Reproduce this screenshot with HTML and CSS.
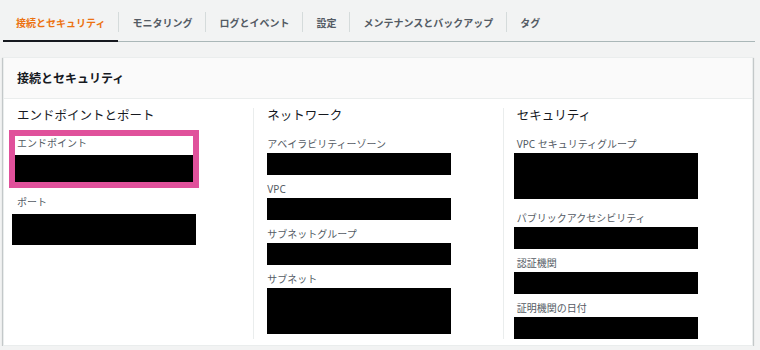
FILE: index.html
```html
<!DOCTYPE html>
<html lang="ja">
<head>
  <meta charset="UTF-8">
  <meta name="viewport" content="width=device-width, initial-scale=1.0">
  <title>接続とセキュリティ</title>
  <link rel="stylesheet" href="styles.css">
</head>
<body>

<nav class="tabs">
  <div class="tab active">接続とセキュリティ</div>
  <span class="tab-sep"></span>
  <div class="tab">モニタリング</div>
  <span class="tab-sep"></span>
  <div class="tab">ログとイベント</div>
  <span class="tab-sep"></span>
  <div class="tab">設定</div>
  <span class="tab-sep"></span>
  <div class="tab">メンテナンスとバックアップ</div>
  <span class="tab-sep"></span>
  <div class="tab">タグ</div>
</nav>

<section class="panel">
  <div class="panel-header">
    <h2>接続とセキュリティ</h2>
  </div>
  <div class="panel-body">
    <div class="col col-endpoint">
      <h3>エンドポイントとポート</h3>
      <div class="item highlight">
        <div class="label">エンドポイント</div>
        <div class="redact redact-hl"></div>
      </div>
      <div class="item">
        <div class="label">ポート</div>
        <div class="redact redact-md"></div>
      </div>
    </div>

    <div class="col">
      <h3>ネットワーク</h3>
      <div class="item">
        <div class="label">アベイラビリティーゾーン</div>
        <div class="redact"></div>
      </div>
      <div class="item">
        <div class="label">VPC</div>
        <div class="redact"></div>
      </div>
      <div class="item">
        <div class="label">サブネットグループ</div>
        <div class="redact"></div>
      </div>
      <div class="item">
        <div class="label">サブネット</div>
        <div class="redact redact-lg"></div>
      </div>
    </div>

    <div class="col col-security">
      <h3>セキュリティ</h3>
      <div class="item item-wide-gap">
        <div class="label">VPC セキュリティグループ</div>
        <div class="redact redact-lg"></div>
      </div>
      <div class="item">
        <div class="label">パブリックアクセシビリティ</div>
        <div class="redact"></div>
      </div>
      <div class="item">
        <div class="label">認証機関</div>
        <div class="redact"></div>
      </div>
      <div class="item">
        <div class="label">証明機関の日付</div>
        <div class="redact"></div>
      </div>
    </div>
  </div>
</section>

</body>
</html>
```

FILE: styles.css
```css
body {
  margin: 0;
  padding: 0 5px 0 3px;
  background-color: #f2f3f3;
  font-family: "Noto Sans", "Noto Sans CJK JP", sans-serif;
  color: #16191f;
}

/* tab bar */
.tabs {
  display: flex;
  align-items: flex-start;
  border-bottom: 1px solid #aab7b8;
}
.tab {
  height: 36px;
  padding: 4px 13px 0;
  display: flex;
  align-items: center;
  font-size: 10px;
  font-weight: bold;
  color: #545b64;
  white-space: nowrap;
  border-bottom: 2px solid transparent;
  margin-bottom: -1px;
}
.tab.active {
  color: #ec7211;
  border-bottom-color: #16191f;
}
.tab-sep {
  width: 1px;
  height: 20px;
  margin-top: 12px;
  background-color: #d5dbdb;
}

/* panel */
.panel {
  margin: 15px 2px 0 0;
  background-color: #fff;
  border: 1px solid #eaeded;
  box-shadow: 0 1px 1px 0 rgba(0, 28, 36, 0.3), 1px 1px 1px 0 rgba(0, 28, 36, 0.15), -1px 1px 1px 0 rgba(0, 28, 36, 0.15);
}
.panel-header {
  height: 40px;
  display: flex;
  align-items: center;
  padding: 0 13px;
  background-color: #fafafa;
  border-bottom: 1px solid #eaeded;
}
.panel-header h2 {
  margin: 0;
  font-size: 12px;
  font-weight: bold;
  color: #16191f;
}
.panel-body {
  display: grid;
  grid-template-columns: repeat(3, 1fr);
  padding: 9px 0 6px;
}
.col {
  padding: 0 13px;
  border-left: 1px solid #eaeded;
}
.col:first-child {
  border-left: none;
}
.col h3 {
  margin: 0 0 14px;
  font-size: 12.5px;
  line-height: 16px;
  font-weight: normal;
  color: #16191f;
}

/* key / value items */
.item {
  margin-bottom: 8px;
}
.item:last-child {
  margin-bottom: 0;
}
.item-wide-gap {
  margin-bottom: 13px;
}
.label {
  font-size: 10px;
  line-height: 13px;
  margin-bottom: 2px;
  color: #545b64;
  white-space: nowrap;
}
.redact {
  width: 184px;
  height: 22px;
  background-color: #000;
}
.redact-md {
  height: 31px;
}
.redact-lg {
  height: 46px;
}
.col-endpoint .label {
  margin-bottom: 5px;
}
.col-endpoint .redact {
  margin-left: -5px;
}
.col-security .redact {
  margin-left: -3px;
}

/* pink highlight around the endpoint */
.highlight {
  width: 190px;
  box-sizing: border-box;
  margin: -8px 0 8px -8px;
  border: 6px solid #e0519b;
}
.highlight .label {
  padding: 1px 0 0 2px;
}
.col-endpoint .redact-hl {
  width: auto;
  height: 27px;
  margin-left: 0;
}
```
